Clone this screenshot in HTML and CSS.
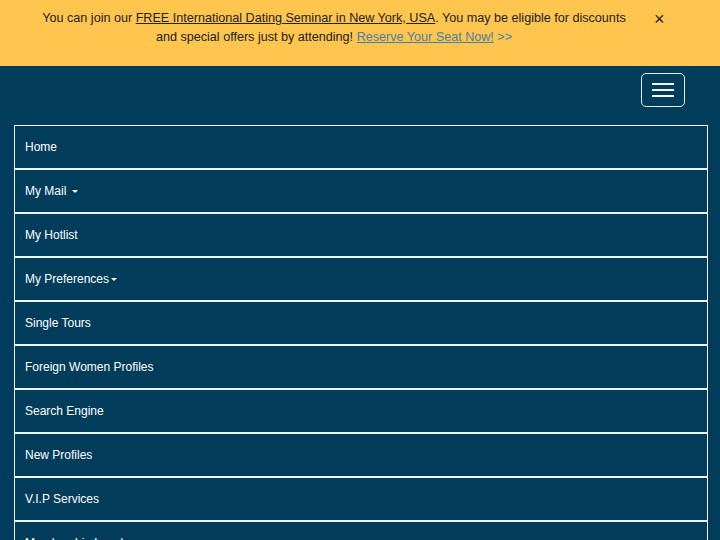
FILE: index.html
```html
<!DOCTYPE html>
<html lang="en">
<head>
  <meta charset="UTF-8" />
  <meta name="viewport" content="width=device-width, initial-scale=1.0"/>
  <title>Menu</title>
  <link rel="stylesheet" href="styles.css">
</head>
<body>

  <div class="promo">
    <p class="promo-text">You can join our <a href="#" class="promo-link">FREE International Dating Seminar in New York, USA</a>. You may be eligible for discounts and special offers just by attending! <a href="#" class="reserve">Reserve Your Seat Now!</a> <span class="arrows">&gt;&gt;</span></p>
    <button class="close">&times;</button>
  </div>

  <nav class="navbar">
    <div class="navbar-header">
      <button class="toggle">
        <span class="bar"></span>
        <span class="bar"></span>
        <span class="bar"></span>
      </button>
    </div>

    <ul class="menu">
      <li><a href="#">Home</a></li>
      <li><a href="#">My Mail <span class="caret"></span></a></li>
      <li><a href="#">My Hotlist</a></li>
      <li><a href="#">My Preferences<span class="caret"></span></a></li>
      <li><a href="#">Single Tours</a></li>
      <li><a href="#">Foreign Women Profiles</a></li>
      <li><a href="#">Search Engine</a></li>
      <li><a href="#">New Profiles</a></li>
      <li><a href="#">V.I.P Services</a></li>
      <li><a href="#">Membership Levels</a></li>
      <li><a href="#">Contact Us</a></li>
    </ul>
  </nav>

</body>
</html>
```

FILE: styles.css
```css
body {
  margin: 0;
  font-family: "Liberation Sans", Arial, sans-serif;
  background: #013d5b;
  color: white;
}

.promo {
  display: flex;
  align-items: flex-start;
  background: #fec54f;
  color: #222;
  height: 66px;
  box-sizing: border-box;
  padding: 9px 0 0 34px;
}

.promo-text {
  width: 600px;
  margin: 0;
  font-size: 12.6px;
  line-height: 19px;
  text-align: center;
}

.promo-link {
  color: #222;
  text-decoration: underline;
}

.reserve, .arrows {
  color: #4a7fa8;
}

.reserve {
  text-decoration: underline;
}

.close {
  margin-left: 20px;
  margin-top: 1px;
  padding: 0;
  background: none;
  border: none;
  font-family: "Liberation Sans", Arial, sans-serif;
  font-size: 18px;
  line-height: 18px;
  color: #222;
  cursor: pointer;
}

.navbar {
  padding: 0 12px 0 14px;
}

.navbar-header {
  display: flex;
  justify-content: flex-end;
  padding: 7px 23px 0 0;
}

.toggle {
  display: flex;
  flex-direction: column;
  justify-content: center;
  align-items: center;
  gap: 4px;
  width: 44px;
  height: 34px;
  padding: 0;
  background: transparent;
  border: 1px solid #e6eef3;
  border-radius: 5px;
  cursor: pointer;
}

.bar {
  display: block;
  width: 22px;
  height: 2px;
  background: #f2f6f8;
}

.menu {
  list-style: none;
  margin: 18px 0 0;
  padding: 0;
}

.menu li {
  border: 1px solid #eef3f6;
}

.menu a {
  display: block;
  height: 42px;
  line-height: 42px;
  padding: 0 10px;
  color: white;
  font-size: 12px;
  text-decoration: none;
}

.caret {
  display: inline-block;
  width: 0;
  height: 0;
  margin-left: 2px;
  vertical-align: middle;
  border-top: 3px solid white;
  border-left: 3px solid transparent;
  border-right: 3px solid transparent;
}
```
